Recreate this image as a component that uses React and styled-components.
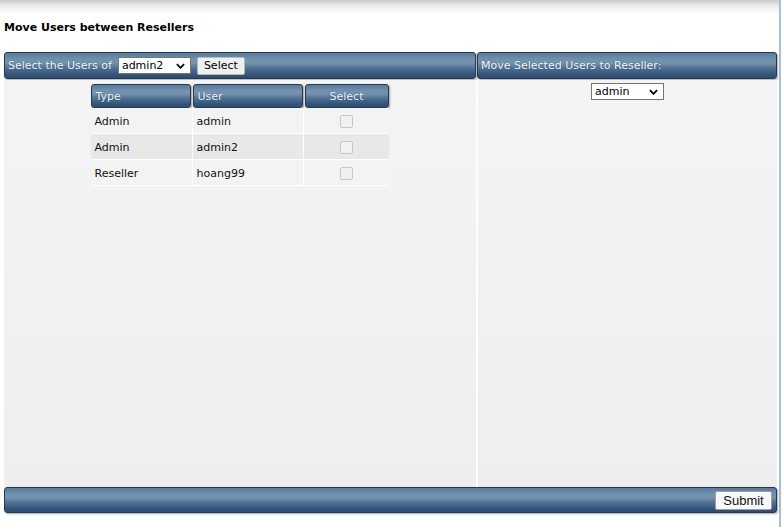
import React from "react";
import styled, { createGlobalStyle } from "styled-components";

const GlobalStyle = createGlobalStyle`
  html, body {
    margin: 0;
    padding: 0;
    background: #ffffff;
  }
  body {
    font-family: Verdana, "DejaVu Sans", sans-serif;
    font-size: 11px;
    color: #000;
  }
`;

const users = [
  { type: "Admin", user: "admin" },
  { type: "Admin", user: "admin2" },
  { type: "Reseller", user: "hoang99" },
];

const resellers = ["admin", "admin2", "hoang99"];

const barGradient = `linear-gradient(
  to bottom,
  #5a7a9c 0%,
  #7090ae 25%,
  #7593b0 40%,
  #4e6f92 62%,
  #34567a 85%,
  #2c4d70 100%
)`;

const Picker = ({ value }) => (
  <PickerWrap>
    <Dropdown defaultValue={value}>
      {resellers.map((r) => (
        <option key={r}>{r}</option>
      ))}
    </Dropdown>
    <Chevron viewBox="0 0 10 6" aria-hidden="true">
      <path d="M1 1l4 4 4-4" />
    </Chevron>
  </PickerWrap>
);

export default function App() {
  return (
    <>
      <GlobalStyle />
      <Page>
        <Title>Move Users between Resellers</Title>

        <Panel>
          <HeadBar>
            <span>Select the Users of</span>
            <Picker value="admin2" />
            <Button type="button">Select</Button>
          </HeadBar>
          <HeadBar>
            <span>Move Selected Users to Reseller:</span>
          </HeadBar>

          <Column>
            <UserTable>
              <HeadRow>
                <HeadCell>Type</HeadCell>
                <HeadCell>User</HeadCell>
                <HeadCell center>Select</HeadCell>
              </HeadRow>
              <Rows>
                {users.map((u, i) => (
                  <Row key={u.user} odd={i % 2 === 1}>
                    <Cell>{u.type}</Cell>
                    <Cell>{u.user}</Cell>
                    <Cell center>
                      <Check type="checkbox" disabled />
                    </Cell>
                  </Row>
                ))}
              </Rows>
            </UserTable>
          </Column>

          <Column right>
            <Picker value="admin" />
          </Column>

          <FootBar>
            <SubmitButton type="button">Submit</SubmitButton>
          </FootBar>
        </Panel>
      </Page>
    </>
  );
}

const Page = styled.div`
  width: 781px;
  min-height: 527px;
  box-sizing: border-box;
  border-right: 2px solid #a9bfd5;
  background: linear-gradient(to bottom, #c9c9c9 0px, #ececec 6px, #ffffff 14px);
  padding: 21px 0 0 4px;
`;

const Title = styled.div`
  font-weight: bold;
  font-size: 11px;
  line-height: 14px;
  color: #000;
  margin-bottom: 17px;
`;

const Panel = styled.div`
  display: grid;
  grid-template-columns: 472px 300px;
  grid-template-rows: 28px 407px 26px;
  column-gap: 1px;
  width: 773px;
`;

const HeadBar = styled.div`
  display: flex;
  align-items: center;
  gap: 6px;
  padding: 0 3px;
  color: #f6f9fc;
  background: ${barGradient};
  border: 1px solid #27394d;
  border-radius: 3px;
  box-shadow: 1px 1px 2px rgba(0, 0, 0, 0.35);
  box-sizing: border-box;
  margin-bottom: 1px;
  white-space: nowrap;
  text-shadow: 0 0 1px rgba(20, 40, 70, 0.7);
`;

const Column = styled.div`
  background: linear-gradient(to bottom, #f4f4f4 0%, #eeeeee 100%);
  border-left: ${({ right }) => (right ? "1px solid #ffffff" : "none")};
  display: flex;
  flex-direction: column;
  align-items: center;
  padding-top: ${({ right }) => (right ? "3px" : "4px")};
  box-sizing: border-box;
`;

const UserTable = styled.div`
  width: 298px;
  margin-right: 1px;
`;

const HeadRow = styled.div`
  display: grid;
  grid-template-columns: 100px 110px 84px;
  column-gap: 2px;
  height: 24px;
`;

const HeadCell = styled.div`
  display: flex;
  align-items: center;
  justify-content: ${({ center }) => (center ? "center" : "flex-start")};
  padding: 0 4px;
  color: #f2f6fa;
  background: ${barGradient};
  border: 1px solid #27394d;
  border-radius: 3px;
  box-shadow: 1px 1px 2px rgba(0, 0, 0, 0.35);
  box-sizing: border-box;
  text-shadow: 0 0 1px rgba(20, 40, 70, 0.7);
`;

const Rows = styled.div`
  display: flex;
  flex-direction: column;
  gap: 1px;
  background: #ffffff;
  padding: 0 0 1px 0;
`;

const Row = styled.div`
  display: grid;
  grid-template-columns: 101px 110px 85px;
  column-gap: 1px;
  height: 25px;
  background: #ffffff;

  & > div {
    background: ${({ odd }) => (odd ? "#e8e8e8" : "#f3f3f3")};
  }
`;

const Cell = styled.div`
  display: flex;
  align-items: center;
  justify-content: ${({ center }) => (center ? "center" : "flex-start")};
  padding: 1px 4px 0;
  color: #111;
`;

const Check = styled.input`
  appearance: none;
  width: 13px;
  height: 13px;
  margin: 0;
  border: 1px solid #c6c6c6;
  border-radius: 2px;
  background: #f1f1f1;
  box-sizing: border-box;
`;

const PickerWrap = styled.span`
  position: relative;
  display: inline-flex;
`;

const Dropdown = styled.select`
  appearance: none;
  width: 73px;
  height: 17px;
  font-family: Verdana, "DejaVu Sans", sans-serif;
  font-size: 11px;
  color: #000;
  background: #ffffff;
  border: 1px solid #767676;
  border-radius: 0;
  padding: 0 0 0 3px;
  box-sizing: border-box;
  text-shadow: none;
  outline: none;
`;

const Chevron = styled.svg`
  position: absolute;
  right: 6px;
  top: 6px;
  width: 9px;
  height: 6px;
  fill: none;
  stroke: #000;
  stroke-width: 2;
  pointer-events: none;
`;

const Button = styled.button`
  height: 18px;
  padding: 0 6px;
  margin-left: 0;
  font-family: Verdana, "DejaVu Sans", sans-serif;
  font-size: 11px;
  color: #000;
  background: #efefef;
  border: 1px solid #b8b8b8;
  border-radius: 2px;
  box-sizing: border-box;
  text-shadow: none;
`;

const FootBar = styled.div`
  grid-column: 1 / 3;
  display: flex;
  align-items: center;
  justify-content: flex-end;
  padding: 0 4px;
  background: ${barGradient};
  border: 1px solid #27394d;
  border-radius: 3px;
  box-shadow: 1px 1px 2px rgba(0, 0, 0, 0.35);
  box-sizing: border-box;
`;

const SubmitButton = styled.button`
  height: 19px;
  width: 57px;
  padding: 0;
  font-family: "Liberation Sans", Arial, sans-serif;
  font-size: 13px;
  color: #111;
  background: #f8f8f8;
  border: 1px solid #a0a0a0;
  border-radius: 2px;
  box-sizing: border-box;
`;
